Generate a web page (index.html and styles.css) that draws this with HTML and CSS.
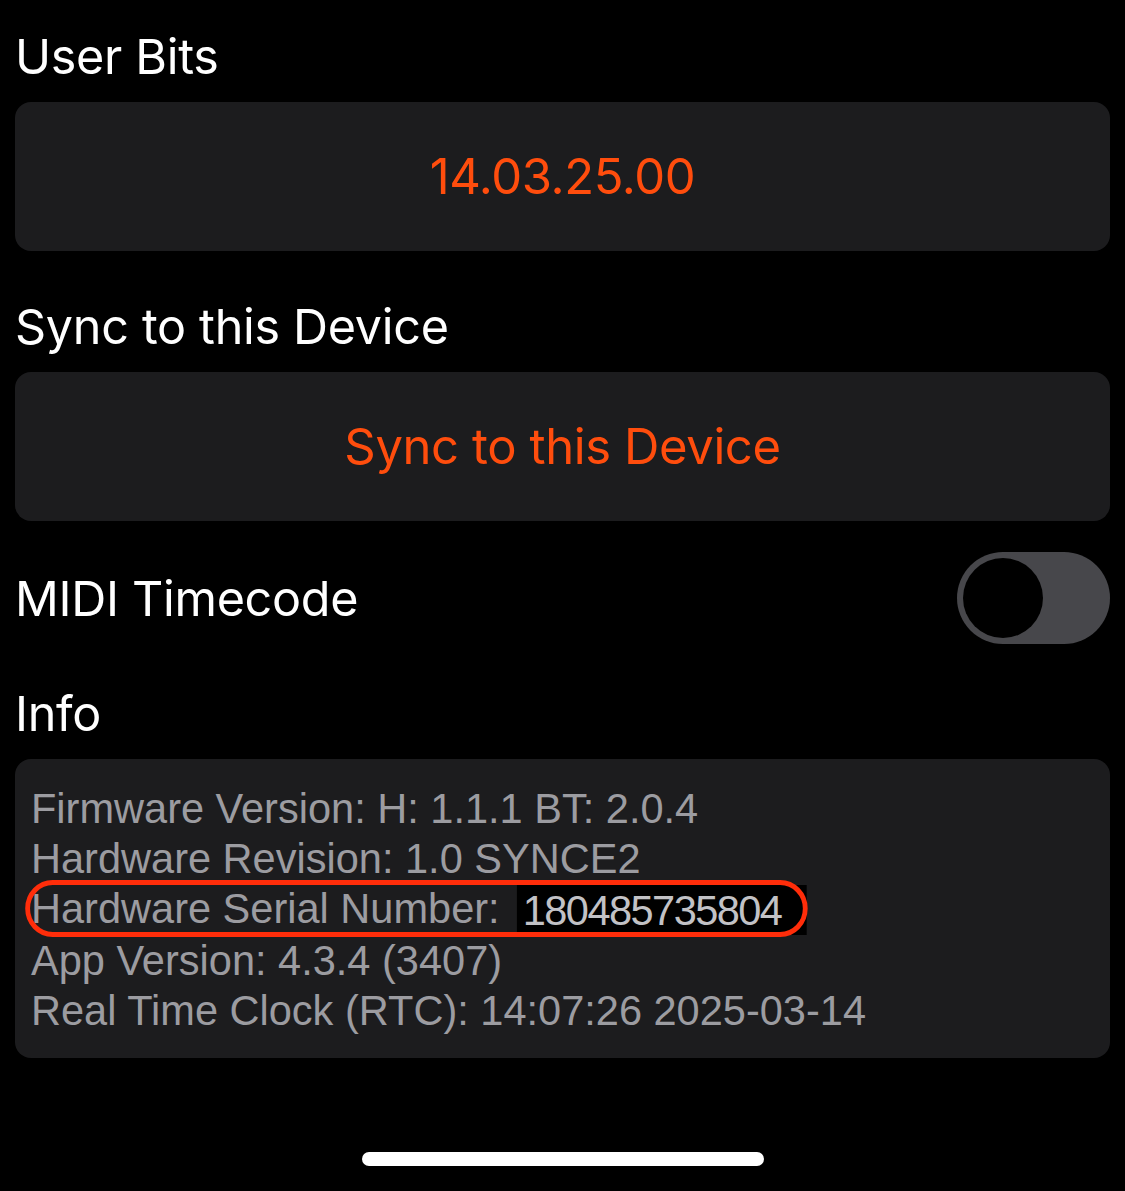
FILE: index.html
```html
<!DOCTYPE html>
<html>
<head>
<meta charset="utf-8">
<link rel="stylesheet" href="styles.css">
</head>
<body>
<div class="screen">
  <div class="section-title">User Bits</div>
  <div class="card center"><span class="accent">14.03.25.00</span></div>

  <div class="section-title second">Sync to this Device</div>
  <div class="card center"><span class="accent">Sync to this Device</span></div>

  <div class="toggle-row">
    <span class="row-label">MIDI Timecode</span>
    <div class="switch"><div class="knob"></div></div>
  </div>

  <div class="section-title info-title">Info</div>
  <div class="card info">
    <div class="info-text">
      <div class="line">Firmware Version: H: 1.1.1 BT: 2.0.4</div>
      <div class="line">Hardware Revision: 1.0 SYNCE2</div>
      <div class="line serial-line">Hardware Serial Number: <span class="serial">180485735804</span><span class="circle"></span></div>
      <div class="line">App Version: 4.3.4 (3407)</div>
      <div class="line">Real Time Clock (RTC): 14:07:26 2025-03-14</div>
    </div>
  </div>

  <div class="home-wrap"><div class="home-indicator"></div></div>
</div>
</body>
</html>
```

FILE: styles.css
```css
html, body {
  margin: 0;
  padding: 0;
  background: #000;
}
body {
  font-family: Inter, "Liberation Sans", sans-serif;
  color: #fff;
  width: 1125px;
  height: 1191px;
  overflow: hidden;
}
.screen {
  display: flex;
  flex-direction: column;
  padding: 0 15px;
}
.section-title {
  font-size: 48.5px;
  line-height: 60px;
  height: 60px;
  margin-top: 27px;
  margin-bottom: 15px;
  letter-spacing: -0.3px;
}
.section-title.second {
  margin-top: 46px;
}
.info-title {
  margin-top: 0;
}
.card {
  background: #1c1c1e;
  border-radius: 16px;
  height: 149px;
}
.center {
  display: flex;
  align-items: center;
  justify-content: center;
}
.accent {
  color: #ff4d0d;
  font-size: 49px;
  letter-spacing: -0.4px;
}
.toggle-row {
  display: flex;
  align-items: center;
  justify-content: space-between;
  margin-top: 31px;
  height: 92px;
  margin-bottom: 40px;
}
.row-label {
  font-size: 48.5px;
  letter-spacing: -0.3px;
}
.switch {
  width: 153px;
  height: 92px;
  border-radius: 46px;
  background: #47474b;
  display: flex;
  align-items: center;
  padding-left: 6px;
  box-sizing: border-box;
}
.knob {
  width: 80px;
  height: 80px;
  border-radius: 50%;
  background: #000;
}
.card.info {
  height: 299px;
  box-sizing: border-box;
  padding-top: 24px;
  padding-left: 16px;
}
.info-text {
  font-family: "Liberation Sans", Arial, sans-serif;
  font-size: 43px;
  line-height: 50px;
  color: #9c9ca1;
  transform: scaleX(0.966);
  transform-origin: left top;
  white-space: nowrap;
}
.serial-line {
  position: relative;
}
.serial {
  display: inline-block;
  vertical-align: top;
  height: 50px;
  margin-top: 2px;
  margin-left: 6px;
  background: #000;
  color: #c2c2c6;
  letter-spacing: -1.6px;
  padding: 0 26px 0 6px;
}
.circle {
  position: absolute;
  left: -6px;
  top: -3px;
  width: 810px;
  height: 57px;
  box-sizing: border-box;
  border: 5px solid #ff2d0a;
  border-radius: 29px;
}
.home-wrap {
  display: flex;
  justify-content: center;
  margin-top: 94px;
}
.home-indicator {
  width: 402px;
  height: 14px;
  border-radius: 7px;
  background: #fff;
}
```
